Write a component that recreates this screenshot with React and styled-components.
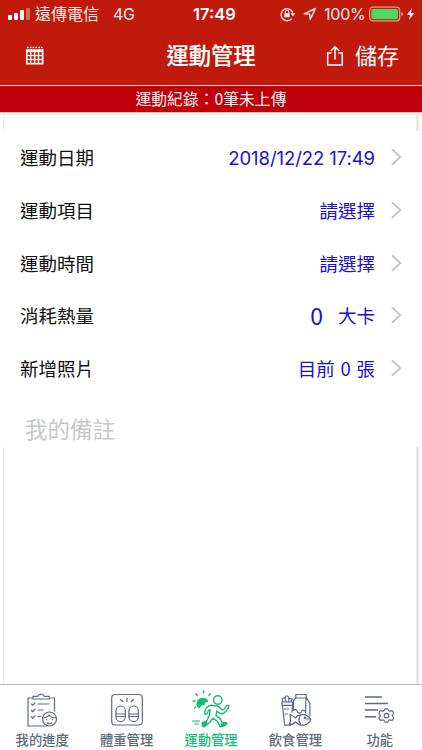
import React from 'react';
import styled, { createGlobalStyle } from 'styled-components';

const GlobalStyle = createGlobalStyle`
  * {
    box-sizing: border-box;
  }

  body {
    margin: 0;
    background: #fff;
    font-family: Inter, 'Noto Sans CJK TC', sans-serif;
  }
`;

const Screen = styled.div`
  display: flex;
  flex-direction: column;
  width: 422px;
  height: 750px;
  overflow: hidden;
  background: #fff;
`;

const Header = styled.header`
  height: 85px;
  background: #bf1a0b;
  color: #fff;
`;

const StatusBar = styled.div`
  display: grid;
  grid-template-columns: 193px 1fr 142px;
  align-items: center;
  height: 28px;
  font-size: 16px;
  line-height: 28px;
  white-space: nowrap;
`;

const StatusGroup = styled.div`
  display: flex;
  align-items: center;
  height: 28px;
  padding-left: ${(props) => props.$left || 0}px;
  color: #ffe9e5;
`;

const Carrier = styled.span`
  margin-left: 5px;
`;

const Network = styled.span`
  margin-left: 14px;
  letter-spacing: -0.4px;
`;

const Clock = styled.span`
  font-size: 16.5px;
  font-weight: 600;
`;

const Percent = styled.span`
  width: 41px;
  margin: 0 4px 0 7px;
  font-size: 16px;
  letter-spacing: -0.2px;
`;

const NavBar = styled.div`
  display: grid;
  grid-template-columns: 120px 1fr 120px;
  align-items: center;
  height: 56px;
`;

const NavLeft = styled.div`
  display: flex;
  padding-left: 25px;
`;

const Title = styled.h1`
  margin: 0;
  font-size: 22.3px;
  font-weight: 500;
  line-height: 32px;
  text-align: center;
  -webkit-text-stroke: 0.2px #fff;
`;

const SaveButton = styled.button`
  display: flex;
  align-items: center;
  gap: 11px;
  padding: 0 0 0 24px;
  border: none;
  background: none;
  color: #fff;
  font-family: inherit;
  font-size: 22px;
  line-height: 32px;
`;

const Banner = styled.div`
  height: 28px;
  border-top: 1px solid #ffd9d5;
  border-bottom: 1px solid #ffb9b5;
  background: #bf0008;
  color: #ffeceb;
  font-family: 'Noto Sans CJK TC', sans-serif;
  font-size: 15.8px;
  line-height: 25px;
  text-align: center;
`;

const Content = styled.main`
  display: flex;
  flex-direction: column;
  flex: 1;
`;

const Rails = styled.div`
  flex: ${(props) => props.$height ? `0 0 ${props.$height}px` : 1};
  margin: 0 3px;
  border-left: 1px solid #eee;
  border-right: 3px solid #e9e9ea;
`;

const Row = styled.div`
  display: flex;
  align-items: center;
  height: 52.7px;
  padding: 2px 20px 0;
  font-size: 18.5px;
  line-height: 28px;
`;

const Label = styled.span`
  flex: 1;
  color: #111;
`;

const Value = styled.span`
  margin-right: 16px;
  margin-bottom: ${(props) => props.$latin ? 0 : 2}px;
  color: #1a10d2;
  font-family: ${(props) => props.$latin ? 'Inter' : "'Noto Sans CJK TC'"}, sans-serif;
  letter-spacing: ${(props) => props.$latin ? '-0.08px' : 'normal'};
  white-space: pre;
  word-spacing: ${(props) => props.$latin ? 0 : 1.6}px;
`;

const Amount = styled.span`
  margin-right: 15px;
  margin-bottom: 3px;
  color: #1a10d2;
  font-family: 'Noto Sans CJK TC', sans-serif;
  font-size: 23px;
`;

const Memo = styled.div`
  height: 53px;
  padding: 19px 0 0 25px;
  color: #c7c7cb;
  font-size: 22.5px;
  line-height: 34px;
`;

const TabBar = styled.nav`
  display: grid;
  grid-template-columns: repeat(5, 1fr);
  height: 66px;
  border-top: 1px solid #bcbcbc;
  background: #fff;
`;

const Tab = styled.div`
  display: flex;
  flex-direction: column;
  align-items: center;
  padding-top: 4px;
  color: ${(props) => (props.$active ? '#16bb75' : '#5d6a80')};
`;

const TabLabel = styled.span`
  font-size: 13.3px;
  font-weight: 500;
  line-height: 20px;
  margin-top: -1px;
`;

const TabSvg = styled.svg`
  width: 44px;
  height: 42px;
  fill: none;
  stroke: currentColor;
  stroke-width: 1.2;
  stroke-linecap: round;
  stroke-linejoin: round;
`;

const SignalIcon = () => (
  <svg width="30" height="28" fill="#fff">
    <rect x="8" y="15" width="4" height="5" rx="1" />
    <rect x="14" y="13" width="4" height="7" rx="1" />
    <rect x="20" y="10" width="4" height="10" rx="1" />
    <rect x="26" y="8" width="4" height="12" rx="1" opacity="0.35" />
  </svg>
);

const LockIcon = () => (
  <svg width="16" height="16" fill="none" stroke="#ffe9e5" strokeWidth="1.4">
    <path d="M11.7 12.6A6 6 0 1 1 12.8 6.7" />
    <path d="M10.6 7.2h4.8l-2.4 3.2z" fill="#ffe9e5" stroke="none" />
    <rect x="4.3" y="7.2" width="5.4" height="4" rx="0.5" fill="#ffe9e5" stroke="none" />
    <path d="M5.3 7.5V5.9a1.7 1.7 0 0 1 3.4 0v1.6" strokeWidth="1.1" />
  </svg>
);

const LocationIcon = () => (
  <svg width="14" height="14" fill="none" stroke="#ffe9e5" strokeWidth="1.4" strokeLinejoin="round">
    <path d="M1.3 6.8 12.4 1.5 7.2 12.5 6.8 7.1z" />
  </svg>
);

const BatteryIcon = () => (
  <svg width="46" height="18">
    <rect x="0.7" y="2.2" width="30" height="13.6" rx="3" fill="none" stroke="#e99b86" strokeWidth="1.2" />
    <rect x="2.4" y="4" width="26.5" height="10.2" rx="1.4" fill="#4cd95f" />
    <path d="M32.3 7v4q2-.5 2-2t-2-2" fill="#e59384" />
    <path d="M43 3 38 9.8h3.1l-1 5.2 5-6.9h-3.2z" fill="#fff" />
  </svg>
);

const CalendarIcon = () => (
  <svg width="20" height="20">
    <path d="M1 3h17.5v15.5H1z" fill="#fff" />
    <path d="M2 1.5h16.5" stroke="#fff" strokeWidth="1.4" strokeDasharray="1.6 1.2" />
    <path d="M1.5 3.2h16.5" stroke="#bf1a0b" strokeWidth="0.8" strokeDasharray="1.5 1.3" />
    {[6.2, 10.2, 14.2].map((y) =>
      [2.5, 6.4, 10.3, 14.2].map((x) => (
        <rect key={`${x}-${y}`} x={x} y={y} width="2.6" height="2.6" fill="#bf1a0b" />
      ))
    )}
  </svg>
);

const ShareIcon = () => (
  <svg width="18" height="22" fill="none" stroke="#fff" strokeWidth="1.5">
    <path d="M5.5 8H1.7v12h14.6V8h-3.8M9 14.5V2M4.8 6 9 1.7 13.2 6" />
  </svg>
);

const Chevron = () => (
  <svg width="11" height="18" viewBox="0 0 11 18" fill="none" stroke="#c5c5ca" strokeWidth="1.9">
    <path d="M1 0.3 9.4 8 1 15.8" />
  </svg>
);

const ProgressIcon = () => (
  <TabSvg viewBox="0 0 44 42">
    <path d="M13 9H8v28h19M31 9h3.5v13" />
    <path d="M13 10V7.3h5a3.2 2.8 0 0 1 6.2 0h5.3V10z" />
    <path d="m11.5 15 1.2 1.4 2.4-2.8M18 15h11M11.5 21.5l1.2 1.4 2.4-2.8M18 21h5M11.5 28l1.2 1.4 2.4-2.8M18 27.5h3" />
    <circle cx="29.5" cy="30" r="7" />
    <path d="M22.5 29c3 .2 5-1 6.5-3 1.5 2 4 3 7.4 3M27.5 34q2 1.5 4 0M26.7 30.5v.3M32.3 30.5v.3" />
  </TabSvg>
);

const ScaleIcon = () => (
  <TabSvg viewBox="0 0 44 42">
    <rect x="6.7" y="5.5" width="30.6" height="30.5" rx="3.5" />
    <path d="M22 9v3.5M15.5 10.5l2.3 2M28.5 10.5l-2.3 2" />
    <rect x="11" y="17" width="9.3" height="15.5" rx="4.6" />
    <rect x="24" y="17" width="9.3" height="15.5" rx="4.6" />
    <path d="M11 25h9.3M11 27.5h9.3M24 25h9.3M24 27.5h9.3" />
  </TabSvg>
);

const RunIcon = () => (
  <TabSvg viewBox="0 0 44 42">
    <path d="M8.8 17.8a5.7 5.7 0 1 1 10-5.6c-2.8.3-3.8 1.8-3.7 3.4-2.8-.3-4.1.3-4.5 2.7z" fill="currentColor" />
    <path d="M14.5 1.8v2.2M7 4.8l1.3 1.8M4.2 12h2M21.4 4.7 20 6.2M5.5 19l1.3-1" strokeWidth="1.5" />
    <circle cx="28.8" cy="11" r="4.2" strokeWidth="1.4" />
    <path d="M25.2 16.8c-3-1.2-5.2-.5-7.2 1.5-1.6 1.7-2.5 4.4-2.3 5.9.2 1.7 2.6 1.4 2.8-.2.2-1.7.8-3 2.6-3.6l-.8 6.1-2.8 5.9-3.6 1.1c-1.6.6-.7 4.1.8 4.1 1.4 0 3.9-2.6 6.4-4.6l2.8-3.8 4.6 3.2 2.2 4.3c.4 1.2 1.1 1.4 2.3.8l4.3-2c1-.6.3-2.2-1-2l-3 .3-2.4-4.4-3.8-2.9.7-4.5c1.8 2 4 3 5.8 2.7 2-.5 5.2-4.3 6.2-6.7.6-1.6-1.5-2.3-2.2-.9l-3.2 3.8c-1.8.4-3-1.5-4.5-3.2-1.2-1.2-2.7-1.1-4.7-.9z" strokeWidth="1.4" />
    <path d="m14.2 34 2.6-.7 1.7 1.3-3.8 3.3zM32 35l4.8-1-4.4 3z" fill="currentColor" />
    <path d="M3.5 32h7M5.5 35h4" />
  </TabSvg>
);

const FoodIcon = () => (
  <TabSvg viewBox="0 0 44 42">
    <path d="M9 13h10.6v3.4H9zM9.5 16.4l2.1 19.8h6M19.5 16.4l-.5 7" />
    <path d="M9.8 13 9.3 9.5l2.5-.8 1.2 4M12.5 9c-.3-3 2.6-3 3.3 0v3.7M15.8 9.3l3.3.5-1 2.9M11.5 20h4M12 25h2.5" />
    <path d="M20.5 11.5 22.8 9V5.5h10.4v3.2l3.7 5.5V27M22.8 9h10.4M20.5 11.5v10c1.5-1.7 3.4-1.2 3.8 1 .6 2 3.3 2.2 4.2 0 .9-2.5 4.2-1.3 4.2 1.5V13M32.7 13l.5-4" />
    <path d="M17 25.5c2.8 1 4.2 2.2 5.5 3.5 2.7-4.2 11.5-5.5 15.4 1.5-3 6.6-10.5 7.5-15.4 2.5-1.5 1.8-3.6 2.7-6 2.7 1.2-3.4 1.6-6.6.5-10.2z" fill="#fff" />
    <path d="M27.5 26q-3 4.5 0 9M37.5 30h-4" />
    <circle cx="32" cy="28.8" r="0.8" fill="currentColor" />
  </TabSvg>
);

const FeatureIcon = () => (
  <TabSvg viewBox="1 0 44 42">
    <path d="M8.5 8h16M8.5 14.5h22M8.5 21h12M8.5 27.7h10" strokeWidth="1.5" />
    <g transform="translate(1.8)">
      <path d="m27.2 19.8 1.3 0c.8 0 .8 1.8 2 2.3 1.3.4 2.5-1 3.2-.3l1.2 2.2c.2.9-1.5 1.3-1.5 2.6s1.7 1.7 1.5 2.5l-1.2 2.1c-.7.7-1.9-.7-3.2-.2-1.2.5-1.2 2.2-2 2.2h-2c-.9 0-.8-1.7-2-2.2-1.3-.5-2.5.9-3.2.2l-1.2-2.1c-.2-.8 1.5-1.2 1.5-2.5s-1.7-1.7-1.5-2.6l1.2-2.2c.7-.7 1.9.7 3.2.3 1.2-.5 1.1-2.3 2-2.3z" />
      <circle cx="27.7" cy="26.6" r="2.3" />
    </g>
  </TabSvg>
);

const rows = [
  { label: '運動日期', value: '2018/12/22 17:49', latin: true },
  { label: '運動項目', value: '請選擇' },
  { label: '運動時間', value: '請選擇' },
  { label: '消耗熱量', amount: '0', value: '大卡' },
  { label: '新增照片', value: '目前 0 張' },
];

const tabs = [
  { label: '我的進度', Icon: ProgressIcon },
  { label: '體重管理', Icon: ScaleIcon },
  { label: '運動管理', Icon: RunIcon, active: true },
  { label: '飲食管理', Icon: FoodIcon },
  { label: '功能', Icon: FeatureIcon },
];

const App = () => {
  return (
    <Screen>
      <GlobalStyle />
      <Header>
        <StatusBar>
          <StatusGroup>
            <SignalIcon />
            <Carrier>遠傳電信</Carrier>
            <Network>4G</Network>
          </StatusGroup>
          <Clock>17:49</Clock>
          <StatusGroup>
            <LockIcon />
            <StatusGroup $left={7}>
              <LocationIcon />
            </StatusGroup>
            <Percent>100%</Percent>
            <BatteryIcon />
          </StatusGroup>
        </StatusBar>
        <NavBar>
          <NavLeft>
            <CalendarIcon />
          </NavLeft>
          <Title>運動管理</Title>
          <SaveButton>
            <ShareIcon />
            儲存
          </SaveButton>
        </NavBar>
      </Header>
      <Banner>運動紀錄：0筆未上傳</Banner>
      <Content>
        <Rails $height={18} />
        {rows.map((row) => (
          <Row key={row.label}>
            <Label>{row.label}</Label>
            {row.amount && <Amount>{row.amount}</Amount>}
            <Value $latin={row.latin}>{row.value}</Value>
            <Chevron />
          </Row>
        ))}
        <Memo>我的備註</Memo>
        <Rails />
      </Content>
      <TabBar>
        {tabs.map(({ label, Icon, active }) => (
          <Tab key={label} $active={active}>
            <Icon />
            <TabLabel>{label}</TabLabel>
          </Tab>
        ))}
      </TabBar>
    </Screen>
  );
};

export default App;
